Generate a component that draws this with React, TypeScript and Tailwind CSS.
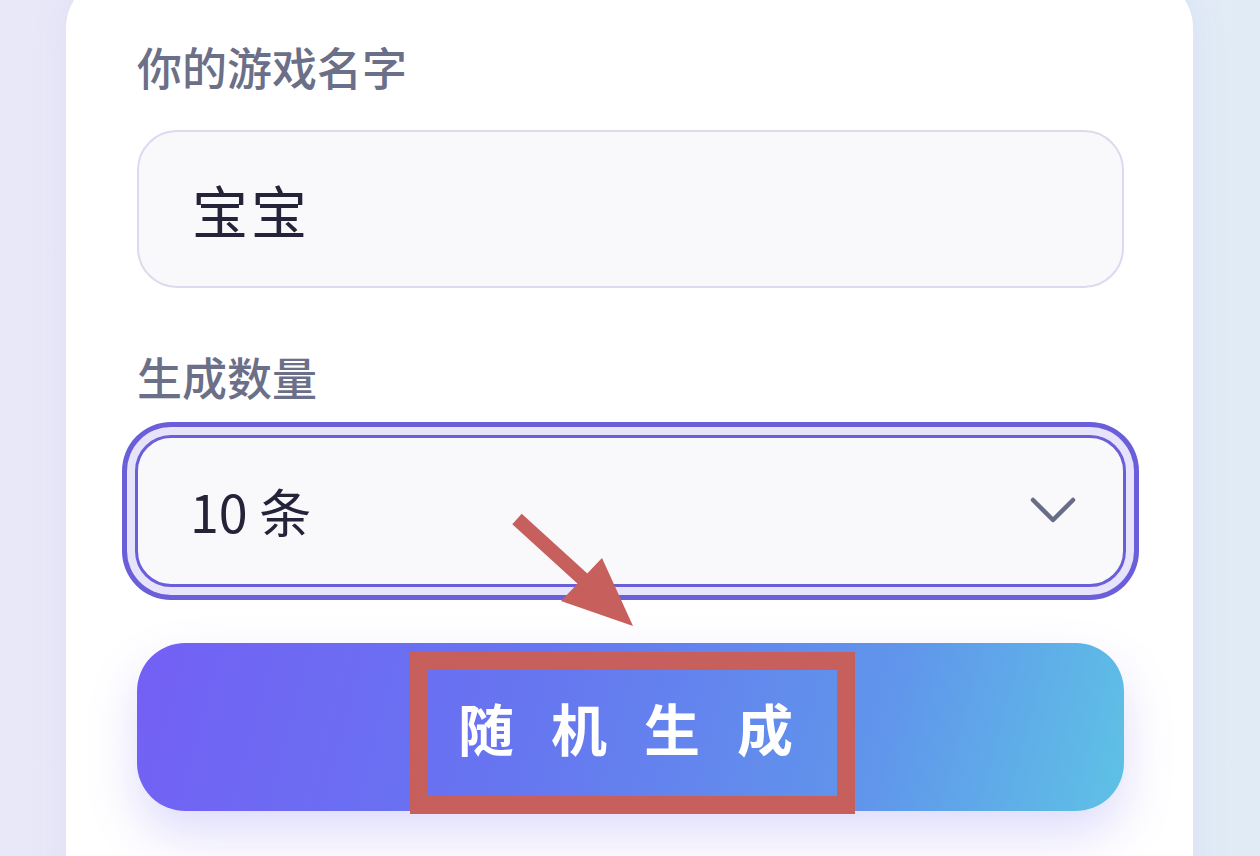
const cjk = { fontFamily: '"Noto Sans CJK SC", "Noto Sans", sans-serif' };

function Chevron() {
  return (
    <svg width="48" height="34" viewBox="0 0 48 34" className="text-[#686c87]">
      <polyline
        points="4,6 24,26 44,6"
        fill="none"
        stroke="currentColor"
        strokeWidth="4.5"
        strokeLinecap="round"
        strokeLinejoin="round"
      />
    </svg>
  );
}

function Annotation() {
  return (
    <svg className="pointer-events-none absolute left-0 top-0" width="1260" height="856" viewBox="0 0 1260 856">
      <line x1="517" y1="519" x2="584" y2="580" stroke="#c75f5c" strokeWidth="14" />
      <polygon points="602,558 561,601 633,626" fill="#c75f5c" />
      <rect x="419" y="661" width="427" height="144" fill="none" stroke="#c75f5c" strokeWidth="18" />
    </svg>
  );
}

function App() {
  return (
    <div
      className="relative h-[856px] w-full overflow-hidden bg-gradient-to-r from-[#e9e8f8] via-[#eceef9] to-[#e1ebf6] pl-[66px] pr-[67px]"
      style={cjk}
    >
      <div className="mt-[-24px] h-[920px] rounded-t-[52px] bg-white pl-[71px] pr-[69px] pt-[64px] shadow-[0_0_40px_rgba(120,110,200,0.08)]">
        <div className="flex h-[52px] items-center text-[45px] font-medium leading-none text-[#6b6f88]">你的游戏名字</div>

        <div className="mt-[38px] flex h-[158px] items-center rounded-[40px] border-2 border-[#dcdaee] bg-[#f9f9fc] pl-[53px] text-[56px] leading-none tracking-[3px] text-[#25233a]">
          宝宝
        </div>

        <div className="mt-[62px] flex h-[52px] items-center text-[45px] font-medium leading-none text-[#6b6f88]">
          生成数量
        </div>

        <div className="mx-[-2px] mt-[33px] flex h-[152px] items-center justify-between rounded-[36px] border-[3px] border-[#6a5fd9] bg-[#f9f9fc] pl-[52px] pr-[46px] text-[52px] leading-none text-[#25233a] shadow-[0_0_0_8px_#e6e3fb,0_0_0_13px_#6a5fd9]">
          <span>10 条</span>
          <Chevron />
        </div>

        <button
          type="button"
          className="mt-[56px] flex h-[168px] w-full items-center justify-center gap-[37px] rounded-[48px] bg-[linear-gradient(105deg,#7360f5_0%,#6676f0_40%,#6096eb_75%,#5ec2e5_100%)] pr-[10px] text-[56px] font-bold leading-none text-white shadow-[0_24px_50px_rgba(110,95,235,0.22)]"
        >
          <span>随</span>
          <span>机</span>
          <span>生</span>
          <span>成</span>
        </button>
      </div>
      <Annotation />
    </div>
  );
}

export default App;
